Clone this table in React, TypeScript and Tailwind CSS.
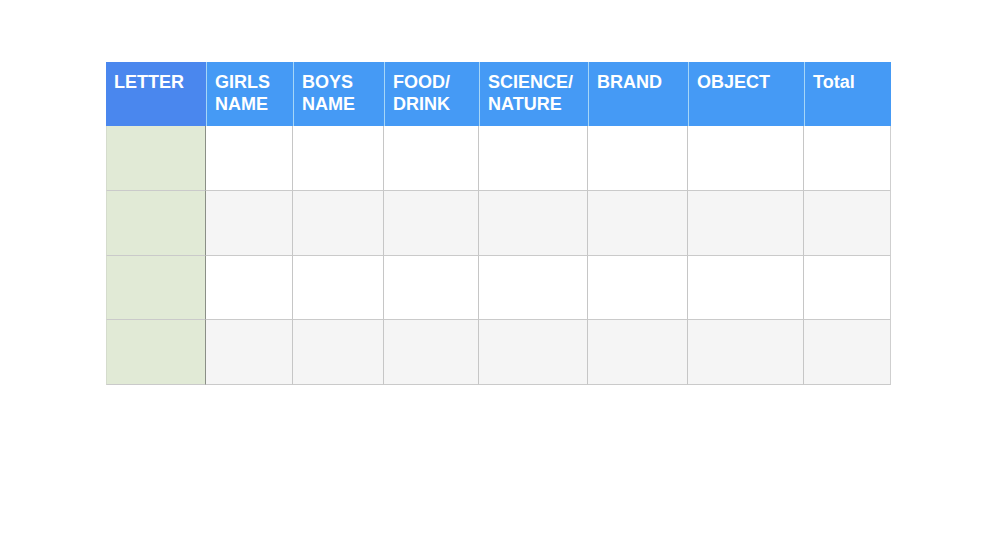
import React from "react";

const cols = ["w-[100px]", "w-[87px]", "w-[91px]", "w-[95px]", "w-[109px]", "w-[100px]", "w-[116px]", "w-[87px]"];
const headers: string[][] = [
  ["LETTER"],
  ["GIRLS", "NAME"],
  ["BOYS", "NAME"],
  ["FOOD/", "DRINK"],
  ["SCIENCE/", "NATURE"],
  ["BRAND"],
  ["OBJECT"],
  ["Total"],
];
const rowH = ["h-[65px]", "h-[65px]", "h-[64px]", "h-[65px]"];

export default function App() {
  return (
    <div className="w-[1000px] h-[533px] bg-white pl-[106px] pt-[62px]" style={{ fontFamily: '"Liberation Sans", Arial, sans-serif' }}>
      <div className="flex flex-col w-[785px]">
        <div className="flex h-[64px]">
          {headers.map((h, i) => (
            <div
              key={i}
              className={`${cols[i]} ${i === 0 ? "bg-[#4a87ee]" : "bg-[#459af5] border-l border-[#a6d6f7]"} pl-[8px] pt-[9px] text-white font-bold text-[18px] leading-[22px]`}
            >
              {h.map((l, j) => (
                <div key={j}>{l}</div>
              ))}
            </div>
          ))}
        </div>
        {rowH.map((rh, r) => (
          <div key={r} className={`flex ${rh}`}>
            {cols.map((c, i) => (
              <div
                key={i}
                className={`${c} border-b border-[#cacaca] ${
                  i === 0
                    ? "bg-[#e1ead6] border-l border-l-[#d5dccd] border-r border-r-[#8a8f86]"
                    : `border-r ${i === 7 ? "border-r-[#cfcfcf]" : "border-r-[#c6c6c6]"} ${r % 2 === 1 ? "bg-[#f5f5f5]" : "bg-white"}`
                }`}
              />
            ))}
          </div>
        ))}
      </div>
    </div>
  );
}
